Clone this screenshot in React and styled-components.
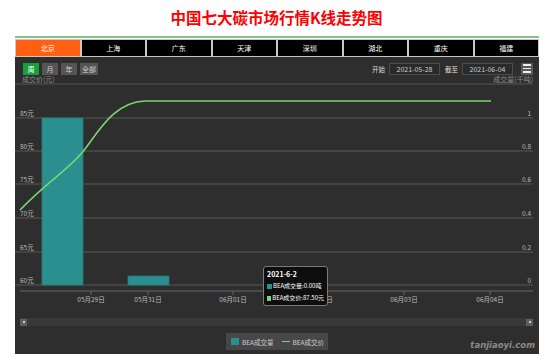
import React from "react";
import styled, { createGlobalStyle } from "styled-components";

const GlobalStyle = createGlobalStyle`
  html, body { margin: 0; padding: 0; background: #fff; overflow: hidden; }
  body { font-family: "Noto Sans CJK SC", "Noto Sans", sans-serif; }
`;

const Page = styled.div`
  width: 553px;
  height: 354px;
  overflow: hidden;
`;

const Title = styled.h1`
  margin: 0;
  height: 36px;
  line-height: 34px;
  text-align: center;
  font-size: 15.5px;
  font-weight: 700;
  color: #f00;
`;

const Divider = styled.div`
  margin: 0 14px 0 15px;
  height: 2px;
  background: #88bf88;
`;

const Tabs = styled.div`
  display: grid;
  grid-template-columns: repeat(8, 1fr);
  margin: 1px 14px 0 15px;
`;

const Tab = styled.div`
  height: 16px;
  line-height: 16px;
  border: 1px solid #c8c8c8;
  background: ${(p) => (p.$active ? "#ff5f12" : "#000")};
  color: #fff;
  font-size: 7px;
  text-align: center;
`;

const Panel = styled.div`
  position: relative;
  margin: 0 14px 0 15px;
  height: 300px;
  box-sizing: border-box;
  padding-top: 5px;
  background: #2e2e2e;
`;

const Toolbar = styled.div`
  display: flex;
  align-items: center;
  height: 13px;
  padding: 0 6px 0 8px;
`;

const ButtonGroup = styled.div`
  display: flex;
  gap: 3px;
`;

const RangeButton = styled.div`
  height: 12px;
  min-width: 16px;
  padding: 0 2px;
  box-sizing: border-box;
  line-height: 12px;
  text-align: center;
  font-size: 7px;
  color: ${(p) => (p.$active ? "#fff" : "#ccc")};
  background: ${(p) => (p.$active ? "#17a03a" : "#555")};
`;

const Spacer = styled.div`
  flex: 1;
`;

const DateLabel = styled.span`
  font-size: 6.5px;
  color: #ddd;
  margin: 0 4px 0 5px;
`;

const DateInput = styled.div`
  width: 51px;
  height: 12px;
  box-sizing: border-box;
  border: 1px solid #4c4c4c;
  background: #2a2a2a;
  color: #ccc;
  font-size: 7px;
  line-height: 10px;
  text-align: center;
`;

const MenuButton = styled.div`
  width: 12px;
  height: 12px;
  margin-left: 8px;
  background: #5a5a5a;
  display: flex;
  flex-direction: column;
  justify-content: center;
  gap: 2px;
  padding: 0 2px;
  box-sizing: border-box;
`;

const MenuBar = styled.span`
  display: block;
  height: 1.5px;
  background: #eee;
`;

const ChartSvg = styled.svg`
  display: block;
`;

const Slider = styled.div`
  display: flex;
  justify-content: space-between;
  align-items: center;
  margin: 13px 6px 0 5px;
  height: 8px;
  background: #393939;
`;

const Handle = styled.div`
  width: 7px;
  height: 7px;
  background: #5e5e5e;
  display: flex;
  align-items: center;
  justify-content: center;
  &::after {
    content: "";
    width: 2px;
    height: 2px;
    background: #ccc;
  }
`;

const Legend = styled.div`
  display: flex;
  align-items: center;
  gap: 8px;
  width: fit-content;
  height: 17px;
  margin: 7px auto 0;
  padding: 0 4px 0 5px;
  box-sizing: border-box;
  background: #474747;
`;

const LegendItem = styled.div`
  display: flex;
  align-items: center;
  gap: 3px;
  flex-shrink: 0;
  white-space: nowrap;
  font-size: 6.5px;
  color: #ccc;
`;

const LegendSwatch = styled.span`
  flex-shrink: 0;
  width: 8px;
  height: ${(p) => (p.$line ? "1.5px" : "7px")};
  background: ${(p) => p.$color};
`;

const Tooltip = styled.div`
  position: absolute;
  left: 248px;
  top: 209px;
  width: 65px;
  height: 40px;
  box-sizing: border-box;
  padding: 2px 3px;
  background: #0e0e0e;
  border: 1px solid #7a7a7a;
  border-radius: 3px;
  color: #fff;
`;

const TipTitle = styled.div`
  font-size: 7px;
  font-weight: 700;
  line-height: 11px;
`;

const TipRow = styled.div`
  display: flex;
  align-items: center;
  gap: 1px;
  font-size: 6px;
  line-height: 12px;
  white-space: nowrap;
`;

const TipDot = styled.span`
  width: 5px;
  height: 5px;
  background: ${(p) => p.$color};
`;

const Watermark = styled.div`
  position: absolute;
  right: 4px;
  top: 283px;
  font-family: "DejaVu Sans", sans-serif;
  font-style: italic;
  font-weight: 700;
  font-size: 8.5px;
  color: #8a8a8a;
`;

const cities = ["北京", "上海", "广东", "天津", "深圳", "湖北", "重庆", "福建"];
const ranges = ["周", "月", "年", "全部"];
const grid = [43, 76, 109, 143, 177, 210];
const priceLabels = ["85元", "80元", "75元", "70元", "65元", "60元"];
const volLabels = ["1", "0.8", "0.6", "0.4", "0.2", "0"];
const ticks = [
  [76, "05月29日"],
  [133, "05月31日"],
  [218, "06月01日"],
  [304, "06月02日"],
  [389, "06月03日"],
  [475, "06月04日"],
];

function Chart() {
  return (
    <ChartSvg width="524" height="230" viewBox="0 0 524 230">
      <text x="7" y="7" fontSize="7" fill="#8a8a8a">成交价(元)</text>
      <text x="518" y="7" fontSize="7" fill="#8a8a8a" textAnchor="end">成交量(千吨)</text>
      <line x1="0" x2="518" y1="9" y2="9" stroke="#555" strokeWidth="1.2" />
      {grid.map((y) => (
        <line key={y} x1="0" x2="518" y1={y} y2={y} stroke="#585858" strokeWidth="1.2" />
      ))}
      {grid.map((y, i) => (
        <text key={"p" + y} x="5" y={y - 2} fontSize="6.5" fill="#bbb">{priceLabels[i]}</text>
      ))}
      {grid.map((y, i) => (
        <text key={"v" + y} x="516" y={y - 2} fontSize="6.5" fill="#bbb" textAnchor="end">{volLabels[i]}</text>
      ))}
      <rect x="27" y="43" width="41" height="167" fill="#2a8f8e" stroke="#237a79" strokeWidth="0.8" />
      <rect x="113" y="201" width="41" height="9" fill="#2a8f8e" stroke="#237a79" strokeWidth="0.8" />
      <path
        d="M5,135 C35,104 55,94 70,74 C85,54 100,27 130,26 L476,26"
        fill="none"
        stroke="#7ad46f"
        strokeWidth="1.6"
      />
      <line x1="5" x2="518" y1="216" y2="216" stroke="#666" strokeWidth="1" />
      {ticks.map(([x, label]) => (
        <g key={label}>
          <line x1={x} x2={x} y1="216" y2="220" stroke="#666" strokeWidth="1" />
          <text x={x} y="227" fontSize="6.5" fill="#bbb" textAnchor="middle">{label}</text>
        </g>
      ))}
    </ChartSvg>
  );
}

export default function App() {
  return (
    <Page>
      <GlobalStyle />
      <Title>中国七大碳市场行情K线走势图</Title>
      <Divider />
      <Tabs>
        {cities.map((c, i) => (
          <Tab key={c} $active={i === 0}>{c}</Tab>
        ))}
      </Tabs>
      <Panel>
        <Toolbar>
          <ButtonGroup>
            {ranges.map((r, i) => (
              <RangeButton key={r} $active={i === 0}>{r}</RangeButton>
            ))}
          </ButtonGroup>
          <Spacer />
          <DateLabel>开始</DateLabel>
          <DateInput>2021-05-28</DateInput>
          <DateLabel>截至</DateLabel>
          <DateInput>2021-06-04</DateInput>
          <MenuButton>
            <MenuBar />
            <MenuBar />
            <MenuBar />
          </MenuButton>
        </Toolbar>
        <Chart />
        <Slider>
          <Handle />
          <Handle />
        </Slider>
        <Legend>
          <LegendItem>
            <LegendSwatch $color="#2a8f8e" />
            BEA成交量
          </LegendItem>
          <LegendItem>
            <LegendSwatch $line $color="#7ad46f" />
            BEA成交价
          </LegendItem>
        </Legend>
        <Tooltip>
          <TipTitle>2021-6-2</TipTitle>
          <TipRow>
            <TipDot $color="#2a8f8e" />
            BEA成交量:0.00吨
          </TipRow>
          <TipRow>
            <TipDot $color="#7ad46f" />
            BEA成交价:87.50元
          </TipRow>
        </Tooltip>
        <Watermark>tanjiaoyi.com</Watermark>
      </Panel>
    </Page>
  );
}
